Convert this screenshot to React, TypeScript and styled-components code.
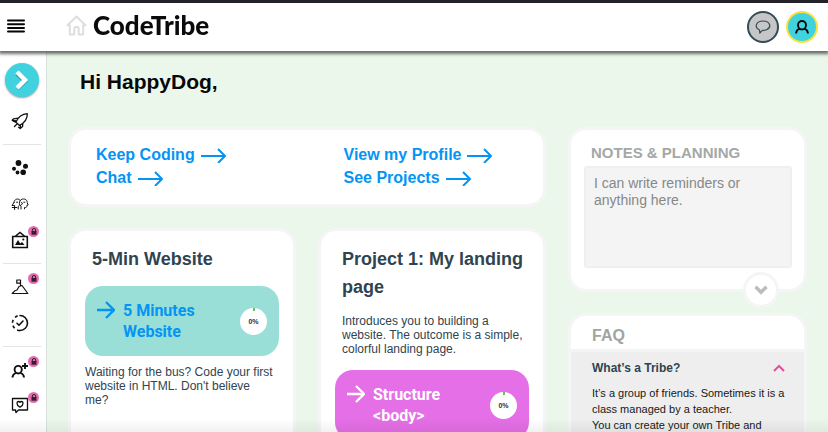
import React from 'react';
import styled, { createGlobalStyle, css } from 'styled-components';

const GlobalStyle = createGlobalStyle`
  * { box-sizing: border-box; }
  body { margin: 0; background: #ecf7ec; font-family: "Liberation Sans", Arial, sans-serif; color: #2f4450; }
  h1, h2, h3, p { margin: 0; }
  button { padding: 0; border: 0; background: none; font: inherit; color: inherit; cursor: pointer; }
  a { color: inherit; text-decoration: none; }
  svg { display: block; flex: none; }
`;

const Page = styled.div`
  display: flex;
  flex-direction: column;
  height: 100vh;
  overflow: hidden;
`;

const Header = styled.header`
  position: relative;
  z-index: 2;
  flex: none;
  display: flex;
  align-items: center;
  padding: 0 10px 0 7px;
  height: 51px;
  border-top: 3px solid #242228;
  background: #fff;
  box-shadow: 0 2px 3px 1px rgba(60, 64, 60, 0.75);
`;

const MenuButton = styled.button`
  margin-right: 41px;
  color: #050505;
`;

const Brand = styled.a`
  display: flex;
  align-items: center;
  gap: 6px;
  padding-bottom: 4px;
  font: 900 26px/30px Lato, sans-serif;
  color: #0b0b0d;
`;

const HeaderActions = styled.div`
  display: flex;
  gap: 7px;
  margin-left: auto;
  padding-bottom: 1px;
`;

const RoundButton = styled.button<{ $fill: string; $ring: string }>`
  display: grid;
  place-items: center;
  width: 32px;
  height: 32px;
  border: 2px solid ${(p) => p.$ring};
  border-radius: 50%;
  background: ${(p) => p.$fill};
  color: #0a0a0a;
`;

const Body = styled.div`
  flex: 1;
  display: flex;
  min-height: 0;
`;

const Sidebar = styled.nav`
  flex: none;
  display: flex;
  flex-direction: column;
  width: 47px;
  padding: 12px 6px 0 3px;
  overflow: hidden;
  background: #fff;
  border-right: 1px solid #d9e2da;
`;

const ExpandButton = styled.button`
  flex: none;
  display: grid;
  place-items: center;
  width: 34px;
  height: 34px;
  margin: 0 0 6px 2px;
  border-radius: 50%;
  background: #40d3df;
  box-shadow: 0 1px 2px rgba(0, 0, 0, 0.4);
`;

const SideLink = styled.a`
  position: relative;
  flex: none;
  display: grid;
  place-items: center;
  width: 34px;
  height: 36px;
  color: #111;
`;

const LockBadge = styled.span`
  position: absolute;
  top: 4px;
  right: -2px;
  display: grid;
  place-items: center;
  width: 11px;
  height: 11px;
  border-radius: 50%;
  background: #e66bb2;
`;

const Divider = styled.hr`
  flex: none;
  width: 38px;
  height: 1px;
  margin: 5px 0;
  border: 0;
  background: #e4e4e4;
`;

const Main = styled.main`
  flex: 1;
  min-width: 0;
  padding: 18px 21px 24px;
  overflow-y: auto;
  scrollbar-width: none;
  background: #ecf7ec;
`;

const Greeting = styled.h1`
  margin: 0 0 32px 12px;
  font-size: 21px;
  line-height: 26px;
  color: #08080a;
`;

const Columns = styled.div`
  display: grid;
  grid-template-columns: minmax(0, 2fr) minmax(0, 1fr);
  align-items: start;
  gap: 22px;
`;

const Stack = styled.div`
  display: flex;
  flex-direction: column;
  gap: 21px;
`;

const Card = styled.section`
  background: #fff;
  border: 3px solid #f4f5f4;
  border-radius: 18px;
`;

const QuickLinks = styled(Card)`
  display: grid;
  grid-template-columns: 1fr 1fr;
  column-gap: 48px;
  padding: 13px 0 15px 25px;
`;

const QuickLink = styled.a`
  display: flex;
  align-items: center;
  gap: 6px;
  justify-self: start;
  font-weight: 700;
  font-size: 16px;
  line-height: 23px;
  white-space: nowrap;
  color: #0494f4;
`;

const Courses = styled.div`
  display: grid;
  grid-template-columns: 1fr 1fr;
  gap: 22px;
`;

const Course = styled(Card)`
  min-height: 250px;
  padding: 14px 14px 20px;
`;

const CourseTitle = styled.h2`
  margin: 0 -4px 13px 7px;
  font-size: 18px;
  line-height: 28px;
`;

const CourseText = styled.p<{ $intro?: boolean }>`
  font-size: 12px;
  line-height: 14px;
  ${(p) =>
    p.$intro
      ? css`
          margin: 0 -4px 14px 7px;
        `
      : css`
          margin-top: 9px;
          padding-right: 4px;
        `}
`;

const Lesson = styled.a<{ $fill: string; $ink: string }>`
  display: flex;
  align-items: center;
  padding: 14px 12px;
  border-radius: 18px;
  background: ${(p) => p.$fill};
  color: ${(p) => p.$ink};
`;

const LessonArrow = styled.span`
  align-self: flex-start;
  margin-right: 8px;
`;

const LessonName = styled.h3`
  flex: 1;
  max-width: 96px;
  font: 700 16px/21px Roboto, sans-serif;
`;

const Progress = styled.span`
  position: relative;
  display: grid;
  place-items: center;
  width: 27px;
  height: 27px;
  margin-left: auto;
  border-radius: 50%;
  background: #fff;
  color: #28333a;
  font: 700 7px/9px "Liberation Sans", sans-serif;

  &::before {
    content: "";
    position: absolute;
    top: 0;
    width: 2px;
    height: 3px;
    background: #62bd68;
  }
`;

const Notes = styled(Card)`
  position: relative;
  padding: 13px 12px 21px 13px;
`;

const NotesTitle = styled.label`
  display: block;
  margin: 0 0 3px 7px;
  font-weight: 700;
  font-size: 15px;
  line-height: 20px;
  color: #a4a8a6;
`;

const NotesInput = styled.textarea`
  display: block;
  width: 100%;
  height: 102px;
  padding: 7px 8px;
  border: 2px solid #efefef;
  border-radius: 3px;
  background: #f4f4f4;
  resize: none;
  outline: none;
  font: 14px/17px "Liberation Sans", Arial, sans-serif;

  &::placeholder {
    color: #858988;
    opacity: 1;
  }
`;

const NotesToggle = styled.button`
  position: absolute;
  right: 25px;
  bottom: -19px;
  display: grid;
  place-items: center;
  width: 36px;
  height: 36px;
  border: 3px solid #f4f5f4;
  border-radius: 50%;
  background: #fff;
`;

const Faq = styled(Card)`
  overflow: hidden;
`;

const FaqTitle = styled.h2`
  padding: 7px 21px 0;
  font-size: 16px;
  line-height: 26px;
  color: #a0a4a2;
  border-bottom: 3px solid #f4f4f4;
`;

const FaqItem = styled.div`
  min-height: 150px;
  padding: 6px 19px 20px 21px;
  background: #eee;
`;

const Question = styled.button`
  display: flex;
  align-items: center;
  justify-content: space-between;
  width: 100%;
  margin-bottom: 7px;
  font-weight: 700;
  font-size: 12px;
  line-height: 20px;
`;

const Answer = styled.p`
  font-size: 11px;
  line-height: 16px;
  color: #15191b;
`;

const BottomShade = styled.div`
  position: fixed;
  inset: auto 0 0;
  height: 14px;
  pointer-events: none;
  background: linear-gradient(rgba(0, 0, 0, 0), rgba(0, 0, 0, 0.05));
`;

const LongArrow = () => (
  <svg width="25" height="16" viewBox="0 0 25 16" fill="none" stroke="currentColor" strokeWidth="2" strokeLinejoin="round">
    <path d="M0 9h24M17 2l7 7-7 7" />
  </svg>
);

const ShortArrow = () => (
  <svg width="18" height="19" viewBox="0 0 18 19" fill="none" stroke="currentColor" strokeWidth="2.300">
    <path d="M0 10h17M9 2l8 8-8 8" />
  </svg>
);

const stroke = { fill: 'none', stroke: 'currentColor', strokeWidth: 1.3, strokeLinecap: 'round', strokeLinejoin: 'round' } as const;

const RocketIcon = () => (
  <svg width="18" height="18" viewBox="0 0 18 18" {...stroke}>
    <path d="M5 10C7 5.500 11 2.200 16.300 1.700C16.500 7 13 11 8.500 13.300M5.500 9 1.200 8.300 2.600 6.800l4.600-.6M9.500 12.800l-.3 3.700-1.700-1.200M11.800 11.300l-.2 3.200-2.400 2M1.200 8.300l3.800 2 3.500 3.200M6.200 11.800 3.500 14.500" />
  </svg>
);

const DotsIcon = () => (
  <svg width="18" height="18" viewBox="0 0 18 18" fill="currentColor">
    <circle cx="7.500" cy="4" r="2.900" />
    <circle cx="14.500" cy="7.300" r="2.500" />
    <circle cx="3" cy="9.800" r="2" />
    <circle cx="6.500" cy="13.500" r="1.900" />
    <circle cx="12.200" cy="13.300" r="2.800" />
  </svg>
);

const FacesIcon = () => (
  <svg width="18" height="14" viewBox="0 0 18 14" {...stroke} strokeWidth="1">
    <path d="M3 5.500C3.200 2 7 .8 9.200 3.500C11.500.7 16.500 2 16.200 5.500l.9 2.500-1.300.5c.2 1.800-.8 2.200-2.300 2v1.300M3 5.500 1 8.500h1.500M1.300 10.500h4.500M3.600 8.500V12.500M9.200 3.500C7.800 5.500 8 8 10 9v3M8.300 8.500 7.200 9.500V12M5.500 5.200h1M12.800 5.200h1" />
    <path d="M10.500 5.500c1.500 0 1.500 2 0 2" />
  </svg>
);

const PictureIcon = () => (
  <svg width="18" height="18" viewBox="0 0 18 18" {...stroke}>
    <path d="M1.700 5.500h14.600v11H1.700zM4 5.500 9 1.500l5 4" strokeLinejoin="miter" strokeWidth="1.600" />
    <path d="M4 14l3-5 2.300 3.500L11 11l2.500 3z" fill="currentColor" stroke="none" />
    <circle cx="12.300" cy="8.500" r="1.100" fill="currentColor" stroke="none" />
  </svg>
);

const MountainIcon = () => (
  <svg width="18" height="18" viewBox="0 0 18 18" {...stroke} strokeWidth="1.200">
    <path d="M1.200 15.500h15.600L11 7.500 8 8.500 6 12l-2 .7zM9.500 7.500V2M9.500 2H5.800v3.200h3.700" />
  </svg>
);

const CheckIcon = () => (
  <svg width="18" height="18" viewBox="0 0 18 18" {...stroke} strokeWidth="1.600">
    <path d="M9 1.500a7.500 7.500 0 0 1 0 15" />
    <path d="M9 16.500a7.500 7.500 0 0 1 0-15" strokeDasharray="3 3" strokeLinecap="butt" />
    <path d="M6 9.300 8 11.300 12 7" />
  </svg>
);

const PersonIcon = ({ plus }: { plus?: boolean }) => (
  <svg width={plus ? 18 : 16} height="16" viewBox={plus ? '0 0 18 16' : '0 0 16 16'} {...stroke} strokeWidth="1.900" strokeLinecap="butt">
    {plus ? (
      <path d="M3.600 7.500a3.600 3.600 0 1 1 7.200 0c0 2-1.600 4-3.600 4s-3.600-2-3.600-4zM1.500 15.500c0-2.500 1-3.500 3.200-4.500M13 15.500c0-2.500-1-3.500-3.200-4.500M14 1v6M11 4h6" />
    ) : (
      <path d="M4 6a4 4 0 1 1 8 0c0 2.300-1.800 4.500-4 4.500S4 8.300 4 6zM2 14.500c.2-2.600 1.200-4 3.500-5M14 14.500c-.2-2.600-1.200-4-3.500-5" />
    )}
  </svg>
);

const HeartChatIcon = () => (
  <svg width="18" height="18" viewBox="0 0 18 18" {...stroke}>
    <path d="M1.500 1.500h15v11.500H7.500L5 15.500 4.500 13h-3z" />
    <path d="M9 10.200C4.300 7.300 6 4.500 7.700 4.500c.8 0 1.300.8 1.300.8s.5-.8 1.300-.8C12 4.500 13.700 7.300 9 10.200z" />
  </svg>
);

const LockIcon = () => (
  <svg width="6" height="7" viewBox="0 0 6 7">
    <path d="M1.300 3.300V2a1.700 1.500 0 0 1 3.400 0v1.300" fill="none" stroke="#35202c" strokeWidth="1" />
    <path d="M.5 3h5v3.700h-5z" fill="#35202c" />
  </svg>
);

const sideGroups = [
  [{ label: 'Launch', icon: <RocketIcon /> }],
  [
    { label: 'Community', icon: <DotsIcon /> },
    { label: 'Friends', icon: <FacesIcon /> },
    { label: 'Gallery', icon: <PictureIcon />, locked: true },
  ],
  [
    { label: 'Challenges', icon: <MountainIcon />, locked: true },
    { label: 'Progress', icon: <CheckIcon /> },
  ],
  [
    { label: 'Invite', icon: <PersonIcon plus />, locked: true },
    { label: 'Feedback', icon: <HeartChatIcon />, locked: true },
  ],
] as { label: string; icon: React.ReactNode; locked?: boolean }[][];

const quickLinks = ['Keep Coding', 'View my Profile', 'Chat', 'See Projects'];

export default function App() {
  return (
    <Page>
      <GlobalStyle />
      <Header>
        <MenuButton aria-label="Menu">
          <svg width="18" height="16" viewBox="0 0 18 16" stroke="currentColor" strokeWidth="2" strokeLinecap="round">
            <path d="M1 1.500h16M1 5.200h16M1 8.900h16M1 12.600h16" />
          </svg>
        </MenuButton>
        <Brand href="#">
          <svg width="21" height="21" viewBox="0 0 21 21" fill="none" stroke="#dedede" strokeWidth="2" strokeLinejoin="round">
            <path d="M1.500 10.200 10.500 1.500l9 8.700h-2.300v9.300h-4.500v-5.500a2.200 2.200 0 0 0-4.400 0v5.500H3.800v-9.300z" />
          </svg>
          CodeTribe
        </Brand>
        <HeaderActions>
          <RoundButton aria-label="Messages" $fill="#c6c6c6" $ring="#344b58">
            <svg width="16" height="16" viewBox="0 0 16 16" fill="none" stroke="#344b58" strokeWidth="1.200" strokeLinejoin="round">
              <path d="M4.500 11C-1 8.500.8 2 8 2s9 6.300 3.500 8.700c-1.400.6-2.600.7-4 .6L4.800 14z" />
            </svg>
          </RoundButton>
          <RoundButton aria-label="Account" $fill="#40d3df" $ring="#fbe03c">
            <PersonIcon />
          </RoundButton>
        </HeaderActions>
      </Header>
      <Body>
        <Sidebar>
          <ExpandButton aria-label="Expand">
            <svg width="16" height="22" viewBox="0 0 16 22" fill="none" strokeWidth="4.500">
              <path d="M3 4.500l8 7.500-8 7.500" stroke="#2a9aa5" />
              <path d="M3 3l8 8-8 8" stroke="#fff" />
            </svg>
          </ExpandButton>
          {sideGroups.map((group, i) => (
            <React.Fragment key={i}>
              {i > 0 && <Divider />}
              {group.map((item) => (
                <SideLink key={item.label} href="#" aria-label={item.label}>
                  {item.icon}
                  {item.locked && (
                    <LockBadge>
                      <LockIcon />
                    </LockBadge>
                  )}
                </SideLink>
              ))}
            </React.Fragment>
          ))}
        </Sidebar>
        <Main>
          <Greeting>Hi HappyDog,</Greeting>
          <Columns>
            <Stack>
              <QuickLinks>
                {quickLinks.map((name) => (
                  <QuickLink key={name} href="#">
                    {name}
                    <LongArrow />
                  </QuickLink>
                ))}
              </QuickLinks>
              <Courses>
                <Course>
                  <CourseTitle>5-Min Website</CourseTitle>
                  <Lesson href="#" $fill="#99dfd7" $ink="#0494f4">
                    <LessonArrow>
                      <ShortArrow />
                    </LessonArrow>
                    <LessonName>5 Minutes Website</LessonName>
                    <Progress>0%</Progress>
                  </Lesson>
                  <CourseText>Waiting for the bus? Code your first website in HTML. Don't believe me?</CourseText>
                </Course>
                <Course>
                  <CourseTitle>Project 1: My landing page</CourseTitle>
                  <CourseText $intro>Introduces you to building a website. The outcome is a simple, colorful landing page.</CourseText>
                  <Lesson href="#" $fill="#e56fe6" $ink="#fff">
                    <LessonArrow>
                      <ShortArrow />
                    </LessonArrow>
                    <LessonName>Structure &lt;body&gt;</LessonName>
                    <Progress>0%</Progress>
                  </Lesson>
                </Course>
              </Courses>
            </Stack>
            <Stack>
              <Notes>
                <NotesTitle htmlFor="notes">NOTES &amp; PLANNING</NotesTitle>
                <NotesInput id="notes" placeholder="I can write reminders or anything here." />
                <NotesToggle aria-label="Show more notes">
                  <svg width="14" height="10" viewBox="0 0 14 10" fill="none" stroke="#bdbdbd" strokeWidth="3.500">
                    <path d="M1.500 1.800 7 7.200l5.500-5.400" />
                  </svg>
                </NotesToggle>
              </Notes>
              <Faq>
                <FaqTitle>FAQ</FaqTitle>
                <FaqItem>
                  <Question aria-expanded="true">
                    What’s a Tribe?
                    <svg width="12" height="8" viewBox="0 0 12 8" fill="none" stroke="#e0509c" strokeWidth="2">
                      <path d="M1 7l5-5 5 5" />
                    </svg>
                  </Question>
                  <Answer>
                    It’s a group of friends. Sometimes it is a class managed by a teacher.
                    <br />
                    You can create your own Tribe and
                  </Answer>
                </FaqItem>
              </Faq>
            </Stack>
          </Columns>
        </Main>
      </Body>
      <BottomShade />
    </Page>
  );
}
